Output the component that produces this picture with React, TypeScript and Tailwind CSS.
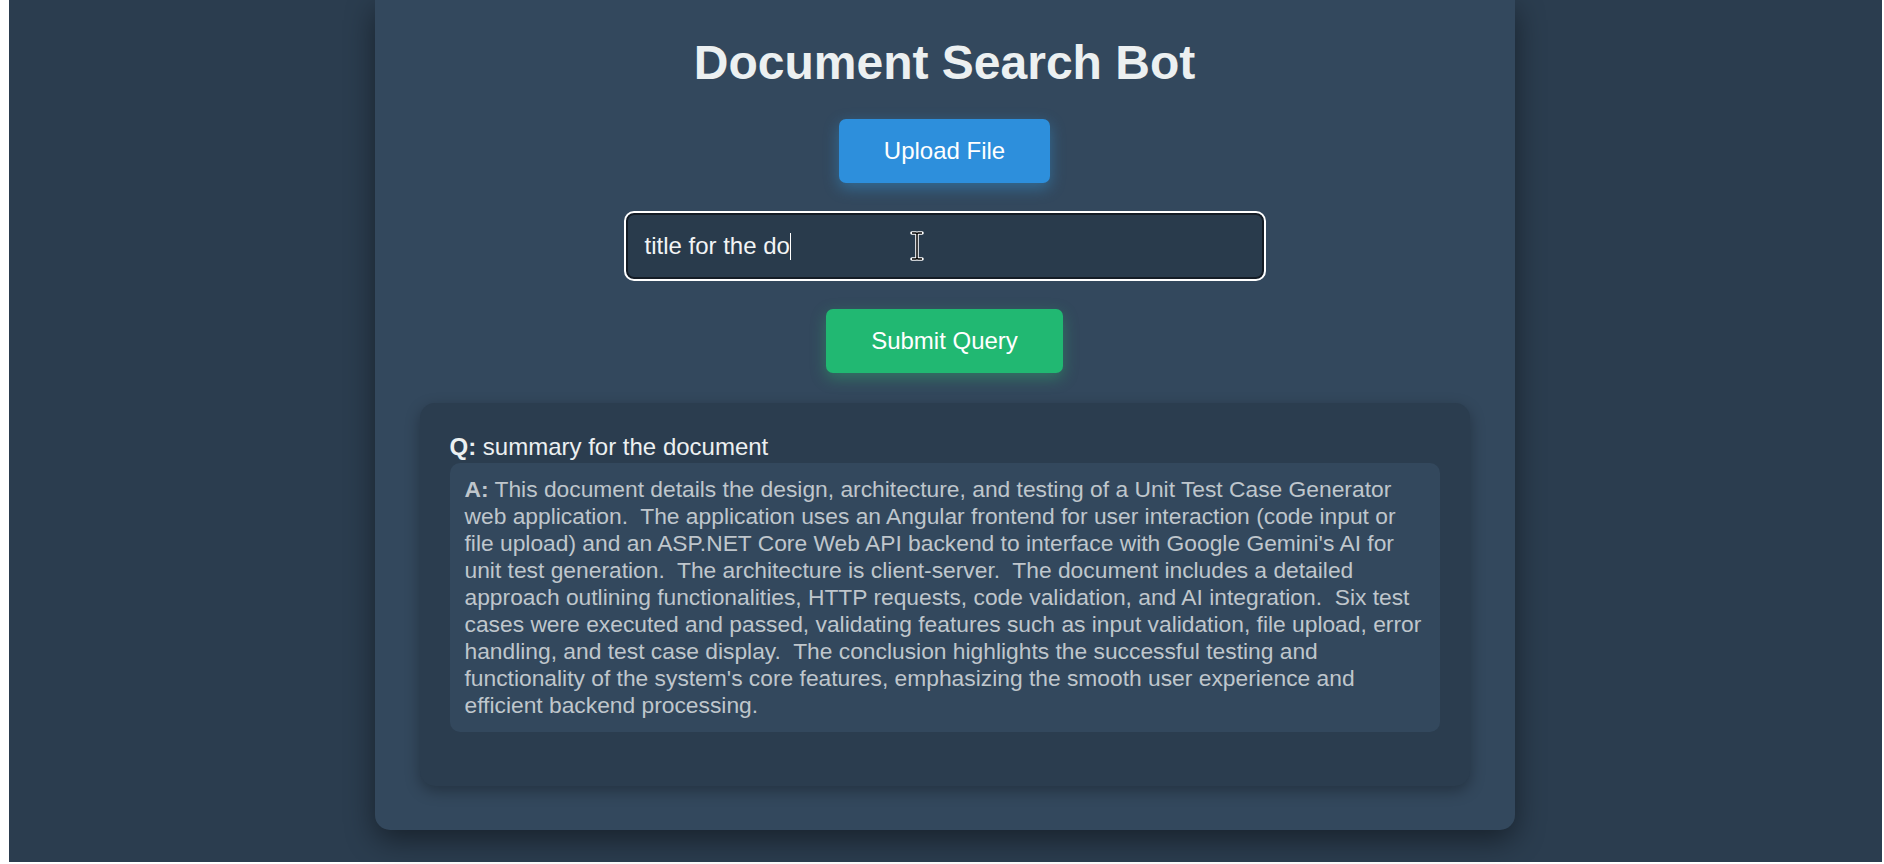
import React from "react";

const answerLines = [
  "web application.  The application uses an Angular frontend for user interaction (code input or",
  "file upload) and an ASP.NET Core Web API backend to interface with Google Gemini's AI for",
  "unit test generation.  The architecture is client-server.  The document includes a detailed",
  "approach outlining functionalities, HTTP requests, code validation, and AI integration.  Six test",
  "cases were executed and passed, validating features such as input validation, file upload, error",
  "handling, and test case display.  The conclusion highlights the successful testing and",
  "functionality of the system's core features, emphasizing the smooth user experience and",
  "efficient backend processing.",
];

function IBeam() {
  return (
    <svg width="16" height="30" viewBox="0 0 16 30" className="absolute left-[281px] top-[16px]">
      <path
        d="M3 2 H7 L8 3 L9 2 H13 M8 3 V27 M3 28 H7 L8 27 L9 28 H13"
        fill="none"
        stroke="#ffffff"
        strokeWidth="3.6"
        strokeLinejoin="round"
        strokeLinecap="round"
      />
      <path
        d="M3 2 H7 L8 3 L9 2 H13 M8 3 V27 M3 28 H7 L8 27 L9 28 H13"
        fill="none"
        stroke="#000000"
        strokeWidth="1.5"
      />
    </svg>
  );
}

export default function App() {
  return (
    <div className="h-[864px] w-full bg-white flex overflow-hidden font-['Liberation_Sans',Arial,sans-serif]">
      <div className="ml-[9px] mr-[2px] mb-[2px] flex-1 bg-[#2b3d4f] flex justify-center">
        <div className="w-[1140px] self-start -translate-x-px bg-[#33485d] rounded-b-[15px] shadow-[0_10px_30px_rgba(0,0,0,0.45)] px-[45px] pt-[35px] pb-[44px] flex flex-col items-center">
          <h1 className="text-[48px] leading-[55px] font-bold text-[#ecf0f1]">Document Search Bot</h1>

          <button className="mt-[29px] bg-[#2d8fdc] text-white text-[24px] leading-[28px] py-[18px] px-[45px] rounded-[7px] shadow-[0_5px_15px_rgba(52,152,219,0.45)]">
            Upload File
          </button>

          <div className="relative mt-[30px] w-[638px] h-[66px] rounded-[8px] border-2 border-[#141c25] outline-2 outline-solid outline-white bg-[#293b4c] flex items-center px-[17px]">
            <span className="text-[24px] text-[#f2f4f5] whitespace-pre">title for the do</span>
            <span className="w-px h-[27px] bg-white"></span>
            <IBeam />
          </div>

          <button className="mt-[30px] bg-[#21b872] text-white text-[24px] leading-[28px] py-[18px] px-[45px] rounded-[7px] shadow-[0_5px_15px_rgba(46,204,113,0.35)]">
            Submit Query
          </button>

          <div className="mt-[30px] w-full bg-[#2b3d4f] rounded-[15px] shadow-[0_5px_15px_rgba(0,0,0,0.3)] p-[30px]">
            <div className="text-[24px] leading-[27.6px] text-[#ecf0f1]">
              <span className="font-bold">Q:</span> summary for the document
            </div>
            <div className="mt-[2px] mb-[24px] bg-[#33485d] rounded-[10px] pl-[15px] pr-[2px] py-[13px] text-[22.8px] leading-[27px] text-[#bfc6cc] whitespace-pre">
              <div>
                <span className="font-bold">A:</span> This document details the design, architecture, and testing of a Unit Test Case Generator
              </div>
              {answerLines.map((l, i) => (
                <div key={i}>{l}</div>
              ))}
            </div>
          </div>
        </div>
      </div>
    </div>
  );
}
